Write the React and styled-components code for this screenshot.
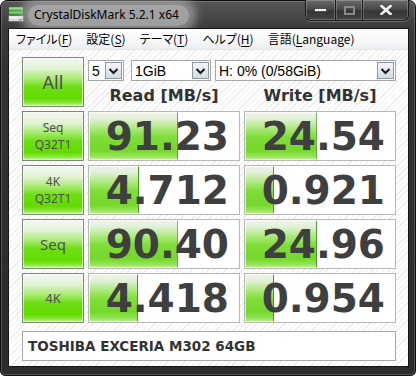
import React from 'react';
import styled, { createGlobalStyle } from 'styled-components';

const GlobalStyle = createGlobalStyle`
  html, body {
    margin: 0;
    padding: 0;
    background: #ffffff;
    overflow: hidden;
  }
`;

const results = [
  { label: ['Seq', 'Q32T1'], size: 12, read: '91.23', write: '24.54' },
  { label: ['4K', 'Q32T1'], size: 12, read: '4.712', write: '0.921' },
  { label: ['Seq'], size: 15, read: '90.40', write: '24.96' },
  { label: ['4K'], size: 13, read: '4.418', write: '0.954' },
];

// CrystalDiskMark meter: log scale, 0.1 MB/s .. 10000 MB/s
const meter = (v) => Math.max(0, Math.min(100, 20 * Math.log10(parseFloat(v)) + 20));

const Window = styled.div`
  width: 416px;
  height: 376px;
  box-sizing: border-box;
  display: flex;
  flex-direction: column;
  background: linear-gradient(to bottom, #565656 0px, #3c3c3c 26px, #333333 60px, #2c2c2c 100%);
  border: 1px solid #0e0e0e;
  border-radius: 7px 7px 5px 5px;
  padding: 0 6px 8px 7px;
  box-shadow: inset 0 0 0 1px rgba(255, 255, 255, 0.18);
`;

const TitleBar = styled.div`
  height: 27px;
  display: flex;
  align-items: flex-start;
  flex-shrink: 0;
`;

const TitleIcon = styled.svg`
  width: 16px;
  height: 16px;
  margin: 6px 0 0 0;
  flex-shrink: 0;
`;

const TitleText = styled.span`
  margin: 4px 0 0 4px;
  padding: 1px 10px 3px 6px;
  font-family: "Noto Sans", "Open Sans", sans-serif;
  font-size: 12px;
  line-height: 17px;
  color: #000;
  border-radius: 10px;
  background: rgba(200, 200, 200, 0.7);
  box-shadow: 0 0 10px 7px rgba(200, 200, 200, 0.55);
`;

const Caption = styled.div`
  margin-left: auto;
  margin-top: -1px;
  display: flex;
  height: 20px;
  border: 1px solid #1a1a1a;
  border-top: none;
  border-radius: 0 0 6px 6px;
  overflow: hidden;
  box-shadow: 0 1px 0 rgba(255, 255, 255, 0.25);
`;

const CaptionButton = styled.div`
  width: ${(p) => p.$w}px;
  display: flex;
  align-items: center;
  justify-content: center;
  background: linear-gradient(to bottom, #6a6a6a 0%, #4a4a4a 45%, #353535 55%, #444 100%);
  box-shadow: inset 0 0 0 1px rgba(255, 255, 255, 0.22);
  & + & {
    border-left: 1px solid #1a1a1a;
  }
`;

const Client = styled.div`
  flex: 1;
  display: flex;
  flex-direction: column;
  border: 1px solid #161616;
  background: repeating-linear-gradient(135deg, #ffffff 0px, #ffffff 3px, #ececec 3px, #ececec 4px);
`;

const MenuBar = styled.div`
  height: 20px;
  display: flex;
  align-items: center;
  background: linear-gradient(to bottom, #ffffff 0%, #f6f7f9 60%, #eceef1 100%);
  border-bottom: 1px solid #e2e4e8;
  flex-shrink: 0;
`;

const MenuItem = styled.span`
  padding: 0 7px;
  font-family: "Noto Sans CJK JP", "Noto Sans", sans-serif;
  font-feature-settings: "palt";
  font-size: 12px;
  line-height: 18px;
  color: #000;
  u {
    text-decoration: underline;
    text-underline-offset: 2px;
  }
`;

const Content = styled.div`
  flex: 1;
  padding: 7px 0 0 13px;
  display: flex;
  flex-direction: column;
  gap: 4px;
`;

const Row = styled.div`
  display: grid;
  grid-template-columns: 62px 152px 152px;
  column-gap: 4px;
  height: 50px;
`;

const LabelButton = styled.div`
  box-sizing: border-box;
  display: flex;
  flex-direction: column;
  align-items: center;
  justify-content: center;
  border: 1px solid #7a8a76;
  background: linear-gradient(to bottom, #f4f7f2 0%, #e2f3d6 22%, #a6ea6c 44%, #6ede16 60%, #62dc00 84%, #88e63a 93%, #c6f4a2 100%);
  box-shadow: inset 0 0 0 1px rgba(255, 255, 255, 0.55);
  font-family: "Noto Sans", "Open Sans", sans-serif;
  font-size: ${(p) => p.$size}px;
  line-height: ${(p) => Math.round(p.$size * 1.4)}px;
  color: #4f4f4f;
`;

const Controls = styled.div`
  grid-column: 2 / 4;
  display: flex;
  flex-direction: column;
`;

const Selects = styled.div`
  display: flex;
  margin-top: 3px;
`;

const Select = styled.div`
  box-sizing: border-box;
  width: ${(p) => p.$w}px;
  margin-right: ${(p) => p.$gap || 0}px;
  height: 21px;
  display: flex;
  align-items: center;
  background: #ffffff;
  border: 1px solid #a3a8ae;
  font-family: "Liberation Sans", Arial, sans-serif;
  font-size: 14px;
  color: #000;
  span {
    flex: 1;
    padding-left: 3px;
    white-space: nowrap;
  }
`;

const DropButton = styled.div`
  box-sizing: border-box;
  width: 17px;
  height: 17px;
  margin-right: 1px;
  display: flex;
  align-items: center;
  justify-content: center;
  border: 1px solid #8d97a3;
  background: linear-gradient(to bottom, #f2f4f7 0%, #e4e8ee 50%, #d6dce4 100%);
`;

const Headers = styled.div`
  flex: 1;
  display: grid;
  grid-template-columns: 152px 152px;
  column-gap: 4px;
  align-items: center;
`;

const Header = styled.div`
  text-align: center;
  font-family: "DejaVu Sans", Verdana, sans-serif;
  font-weight: bold;
  font-size: 16px;
  color: #333333;
  padding-top: 3px;
`;

const Cell = styled.div`
  box-sizing: border-box;
  display: flex;
  align-items: center;
  justify-content: flex-end;
  padding-right: 10px;
  border: 1px solid #b8b8b8;
  background-color: #ffffff;
  background-image:
    linear-gradient(to right, transparent calc(100% - 1px), #3e9a22 calc(100% - 1px)),
    linear-gradient(to bottom, #f0f3ee 0%, #e2f0d8 14%, #ace97c 34%, #80dd3a 52%, #74d82a 80%, #94e258 92%, #c2f092 100%);
  background-repeat: no-repeat;
  background-size: ${(p) => p.$pct}% 100%, ${(p) => p.$pct}% 100%;
  box-shadow: inset 0 0 0 1px rgba(255, 255, 255, 0.7);
  font-family: "DejaVu Sans", Verdana, sans-serif;
  font-weight: bold;
  font-size: 39px;
  color: #3f3f3f;
`;

const Comment = styled.div`
  box-sizing: border-box;
  margin-top: 4px;
  width: 374px;
  height: 30px;
  display: flex;
  align-items: center;
  padding-left: 5px;
  background: #ffffff;
  border: 1px solid #a8a8a8;
  font-family: "DejaVu Sans", Verdana, sans-serif;
  font-weight: bold;
  font-size: 13.5px;
  color: #333333;
`;

function Chevron() {
  return (
    <svg width="11" height="8" viewBox="0 0 11 8">
      <polyline points="1.5,2 5.5,6 9.5,2" fill="none" stroke="#1a1a1a" strokeWidth="2" />
    </svg>
  );
}

function DriveIcon() {
  return (
    <TitleIcon viewBox="0 0 16 16">
      <rect x="1" y="0.5" width="14" height="3" rx="0.5" fill="#5fd84a" />
      <rect x="1" y="0.5" width="14" height="1" fill="#a8f29a" />
      <rect x="1" y="4.5" width="14" height="3" rx="0.5" fill="#48c436" />
      <rect x="1" y="4.5" width="14" height="1" fill="#8ee67e" />
      <rect x="0.5" y="8.5" width="15" height="6" rx="1" fill="#d8d8d8" stroke="#6a6a6a" />
      <rect x="1.5" y="9.5" width="13" height="2" fill="#f4f4f4" />
      <rect x="11" y="12" width="3" height="1.5" fill="#3ad42a" />
    </TitleIcon>
  );
}

export default function App() {
  return (
    <>
      <GlobalStyle />
      <Window>
        <TitleBar>
          <DriveIcon />
          <TitleText>CrystalDiskMark 5.2.1 x64</TitleText>
          <Caption>
            <CaptionButton $w={29}>
              <svg width="13" height="4" viewBox="0 0 13 4">
                <rect x="0.5" y="0.5" width="12" height="3" fill="#f4f4f4" stroke="#222" strokeWidth="0.6" />
              </svg>
            </CaptionButton>
            <CaptionButton $w={26}>
              <svg width="11" height="9" viewBox="0 0 11 9">
                <rect x="1" y="1" width="9" height="7" fill="none" stroke="#8a8a8a" strokeWidth="2" />
              </svg>
            </CaptionButton>
            <CaptionButton $w={45}>
              <svg width="12" height="10" viewBox="0 0 12 10">
                <path d="M1.5 1 L10.5 9 M10.5 1 L1.5 9" stroke="#f0f0f0" strokeWidth="2.6" strokeLinecap="square" />
              </svg>
            </CaptionButton>
          </Caption>
        </TitleBar>

        <Client>
          <MenuBar>
            <MenuItem>ファイル(<u>F</u>)</MenuItem>
            <MenuItem>設定(<u>S</u>)</MenuItem>
            <MenuItem>テーマ(<u>T</u>)</MenuItem>
            <MenuItem>ヘルプ(<u>H</u>)</MenuItem>
            <MenuItem>言語(<u>L</u>anguage)</MenuItem>
          </MenuBar>

          <Content>
            <Row>
              <LabelButton $size={18}>All</LabelButton>
              <Controls>
                <Selects>
                  <Select $w={36} $gap={7}>
                    <span>5</span>
                    <DropButton><Chevron /></DropButton>
                  </Select>
                  <Select $w={80} $gap={4}>
                    <span>1GiB</span>
                    <DropButton><Chevron /></DropButton>
                  </Select>
                  <Select $w={181}>
                    <span>H: 0% (0/58GiB)</span>
                    <DropButton><Chevron /></DropButton>
                  </Select>
                </Selects>
                <Headers>
                  <Header>Read [MB/s]</Header>
                  <Header>Write [MB/s]</Header>
                </Headers>
              </Controls>
            </Row>

            {results.map((r) => (
              <Row key={r.label.join('-')}>
                <LabelButton $size={r.size}>
                  {r.label.map((line) => (
                    <div key={line}>{line}</div>
                  ))}
                </LabelButton>
                <Cell $pct={meter(r.read)}>{r.read}</Cell>
                <Cell $pct={meter(r.write)}>{r.write}</Cell>
              </Row>
            ))}

            <Comment>TOSHIBA EXCERIA M302 64GB</Comment>
          </Content>
        </Client>
      </Window>
    </>
  );
}
